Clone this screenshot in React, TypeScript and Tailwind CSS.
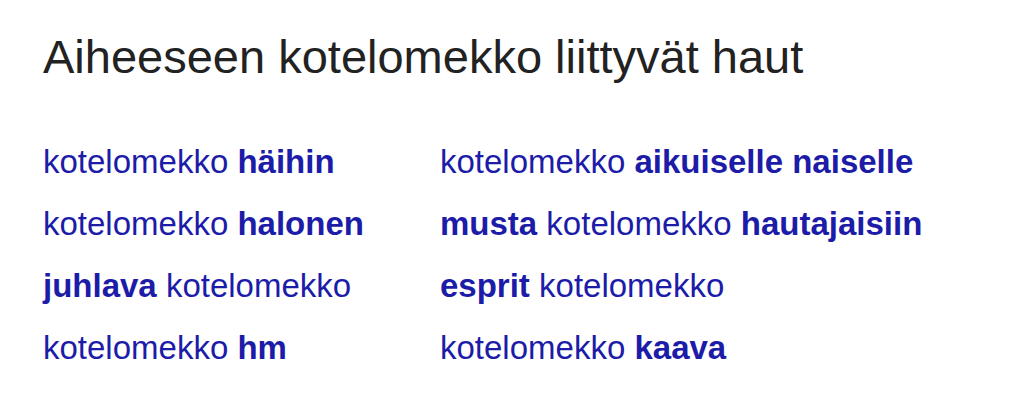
import React from 'react'

type Part = { t: string; b?: boolean }

const left: Part[][] = [
  [{ t: 'kotelomekko ' }, { t: 'häihin', b: true }],
  [{ t: 'kotelomekko ' }, { t: 'halonen', b: true }],
  [{ t: 'juhlava', b: true }, { t: ' kotelomekko' }],
  [{ t: 'kotelomekko ' }, { t: 'hm', b: true }],
]

const right: Part[][] = [
  [{ t: 'kotelomekko ' }, { t: 'aikuiselle naiselle', b: true }],
  [{ t: 'musta', b: true }, { t: ' kotelomekko ' }, { t: 'hautajaisiin', b: true }],
  [{ t: 'esprit', b: true }, { t: ' kotelomekko' }],
  [{ t: 'kotelomekko ' }, { t: 'kaava', b: true }],
]

const Haku: React.FC<{ parts: Part[] }> = ({ parts }) => (
  <a href="#" className="block h-[62px] leading-[62px] whitespace-pre text-[#1c1ca8]">
    {parts.map((p, i) => (
      <span key={i} className={p.b ? 'font-bold' : ''}>
        {p.t}
      </span>
    ))}
  </a>
)

export default function App() {
  return (
    <div className="w-[1024px] h-[412px] bg-white pl-[43px] pt-[25px] font-['Liberation_Sans',Arial,sans-serif]">
      <h1 className="text-[47px] leading-[64px] text-[#222]">Aiheeseen kotelomekko liittyvät haut</h1>
      <div className="mt-[42px] flex text-[33px]">
        <div className="w-[397px]">
          {left.map((r, i) => (
            <Haku key={i} parts={r} />
          ))}
        </div>
        <div>
          {right.map((r, i) => (
            <Haku key={i} parts={r} />
          ))}
        </div>
      </div>
    </div>
  )
}
